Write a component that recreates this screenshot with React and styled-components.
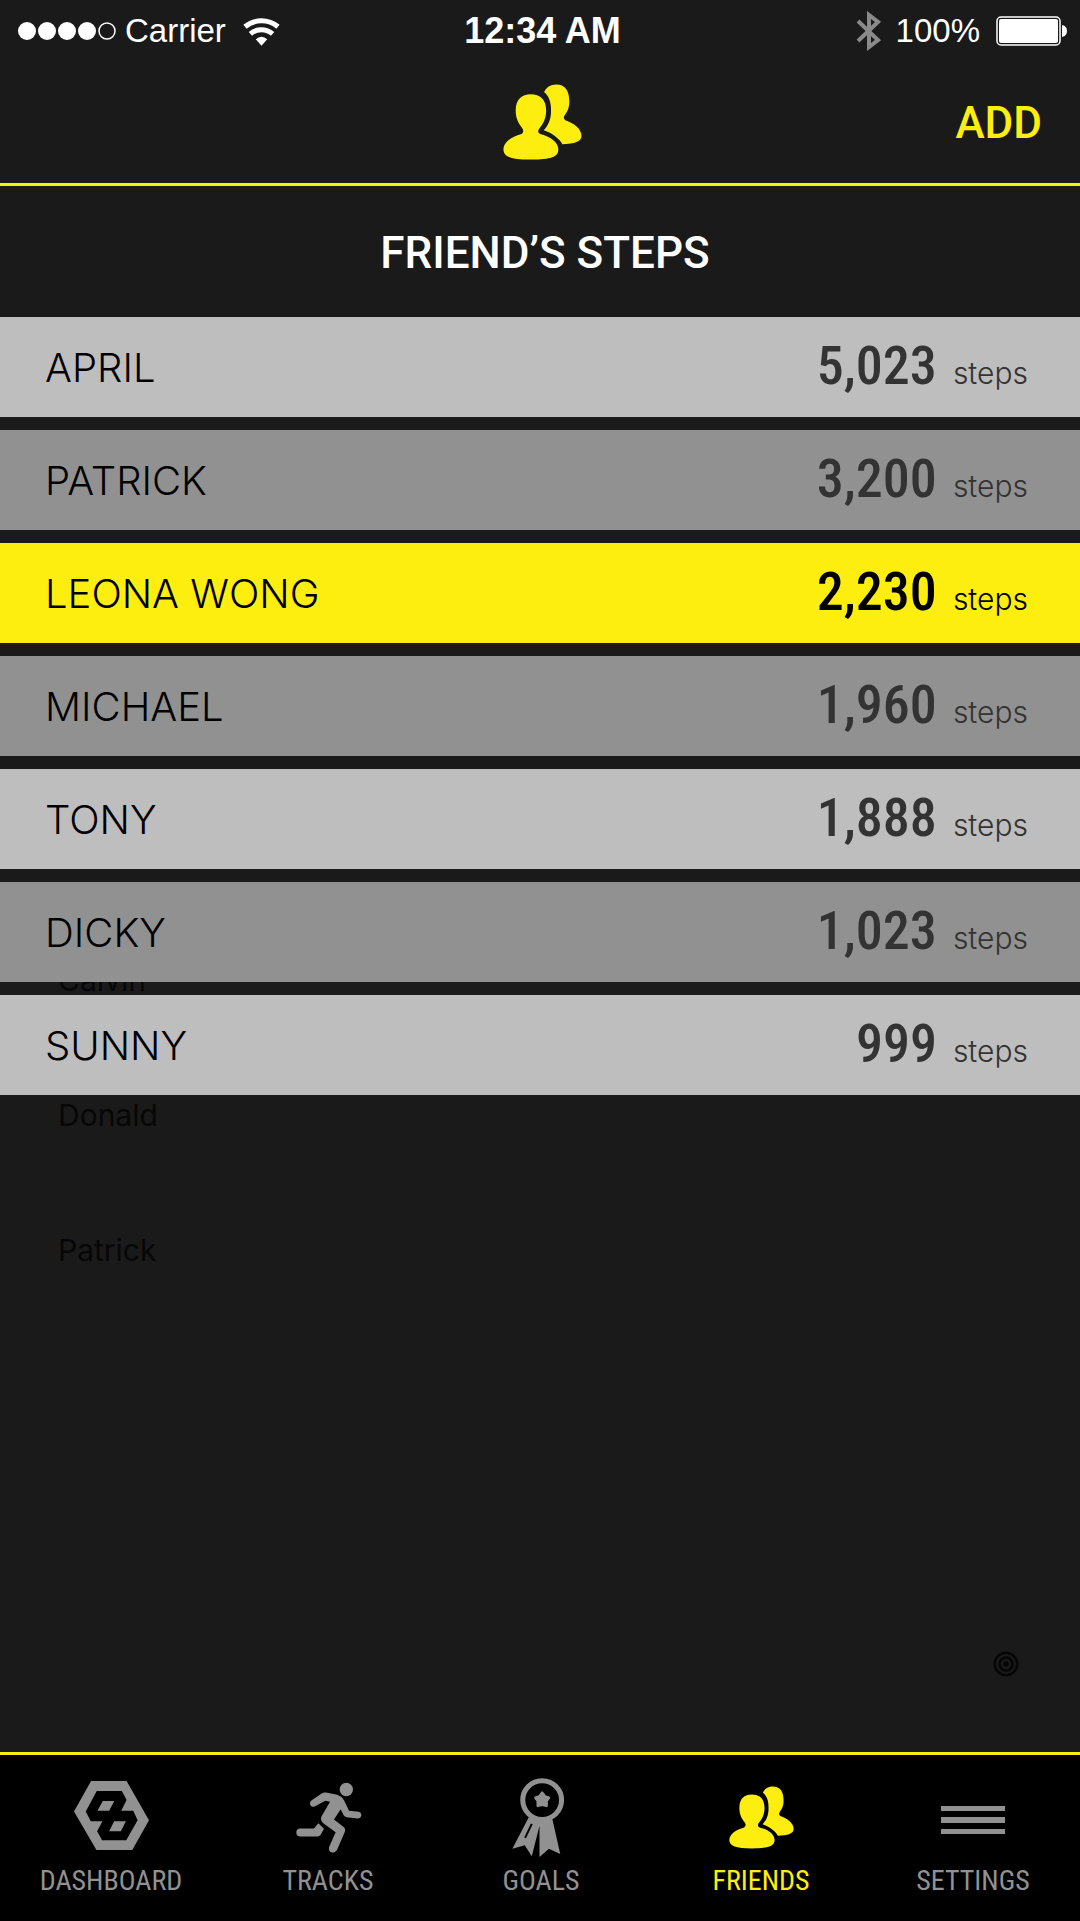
import React, { useState } from 'react';
import styled, { createGlobalStyle } from 'styled-components';

const YELLOW = '#FDEE10';
const GREY = '#919191';

const friends = [
    { name: 'APRIL', steps: '5,023' },
    { name: 'PATRICK', steps: '3,200' },
    { name: 'LEONA WONG', steps: '2,230', me: true },
    { name: 'MICHAEL', steps: '1,960' },
    { name: 'TONY', steps: '1,888' },
    { name: 'DICKY', steps: '1,023' },
    { name: 'SUNNY', steps: '999' },
];

const contacts = ['Calvin', 'Donald', 'Patrick'];

const FriendsIcon = ({ width, height }) => (
    <svg width={width} height={height} viewBox='866 137 194 187' fill='currentColor' aria-hidden='true'>
        <path d='M934 162C912 162 897 174 897 203C897 222 905 236 912 244C917 250 917 256 911 260C888 266 867 280 867 298C867 316 886 323 935 323C984 323 1002 316 1002 298C1002 280 982 266 957 260C950 256 952 250 957 244C964 236 972 222 972 203C972 174 957 162 934 162Z' />
        <path d='M967 157C972 145 982 138 997 138C1018 138 1029 152 1029 180C1029 198 1022 208 1018 213C1014 218 1015 222 1019 226C1040 233 1059 247 1059 265C1059 278 1042 285 1012 285C1004 272 988 258 966 251C975 242 985 226 984 200C984 180 978 165 967 157Z' />
    </svg>
);

const DashboardIcon = () => (
    <svg width='75' height='73' viewBox='219 120 224 218' fill='currentColor' aria-hidden='true'>
        <path
            fillRule='evenodd'
            d='M270 120H376L443 237L393 326H286L219 211ZM287 150L254 211L269 240H304L288 270L303 297H375L409 237L396 209H360L376 177L362 150ZM305 180H339L324 209H289ZM339 240H374L359 270H324Z'
        />
    </svg>
);

const TracksIcon = () => (
    <svg width='68' height='71' viewBox='882 122 204 212' fill='currentColor' aria-hidden='true'>
        <circle cx='1039' cy='144' r='20' />
        <path d='M933 178L966 155Q971 152 978 153L1012 160Q1026 165 1032 176L1047 208L1076 211Q1085 214 1084 222Q1082 231 1073 231L1040 227Q1034 226 1031 221L1022 203L1002 234L1030 256Q1038 262 1034 272L1012 323Q1006 334 996 333Q985 330 987 317L1007 272L972 247Q960 238 964 226L990 181L976 178L944 195Q936 197 931 191Q928 184 933 178Z' />
        <path d='M901 261H942L955 245L972 262L962 280Q958 285 952 285H901A12 12 0 0 1 901 261Z' />
    </svg>
);

const GoalsIcon = () => (
    <svg width='59' height='79' viewBox='216 113 176 236' fill='currentColor' aria-hidden='true'>
        <circle cx='306' cy='179' r='58' fill='none' stroke='currentColor' strokeWidth='15' />
        <path
            d='M306 157L314 168L326 172L319 182L319 196L306 193L293 196L293 182L286 172L298 168Z'
            stroke='currentColor'
            strokeWidth='8'
            strokeLinejoin='round'
        />
        <path d='M266 230L217 324L254 314L275 347L298 256L298 349L326 324L360 340L336 234Q306 246 266 230Z' />
        <path d='M275 250L255 292' stroke='#000' strokeWidth='6' />
    </svg>
);

const SettingsIcon = () => (
    <svg width='64' height='35' viewBox='0 0 64 35' fill='currentColor' aria-hidden='true'>
        <rect y='6' width='64' height='5' />
        <rect y='17' width='64' height='6' />
        <rect y='29' width='64' height='5' />
    </svg>
);

const SignalIcon = () => (
    <svg width='100' height='20' viewBox='0 0 100 20' fill='#FFF' aria-hidden='true'>
        <circle cx='10' cy='10' r='9' />
        <circle cx='30' cy='10' r='9' />
        <circle cx='50' cy='10' r='9' />
        <circle cx='70' cy='10' r='9' />
        <circle cx='90' cy='10' r='8' fill='none' stroke='#FFF' strokeWidth='1.5' />
    </svg>
);

const WifiIcon = () => (
    <svg width='37' height='29' viewBox='728 44 110 86' fill='none' stroke='#FFF' strokeWidth='15' aria-hidden='true'>
        <path d='M734 73A76 76 0 0 1 832 73' />
        <path d='M750 94A50 50 0 0 1 816 94' />
        <path d='M783 129L766 110Q783 95 800 110Z' fill='#FFF' stroke='none' />
    </svg>
);

const BluetoothIcon = () => (
    <svg width='26' height='40' viewBox='0 0 26 40' fill='none' stroke='#8A8A8A' strokeWidth='4' aria-hidden='true'>
        <path d='M2 10L22 29L13 36V4L22 11L2 30' />
    </svg>
);

const BatteryIcon = () => (
    <svg width='72' height='30' viewBox='0 0 72 30' aria-hidden='true'>
        <rect x='1' y='1' width='63' height='28' rx='4' fill='none' stroke='#FFF' strokeWidth='1.5' />
        <rect x='3' y='3' width='59' height='24' rx='2' fill='#FFF' />
        <path d='M66 9Q71 10 71 15Q71 20 66 21Z' fill='#FFF' />
    </svg>
);

const TargetIcon = () => (
    <svg width='26' height='26' viewBox='0 0 26 26' fill='none' stroke='#060606' strokeWidth='2.5' aria-hidden='true'>
        <circle cx='13' cy='13' r='11.3' />
        <circle cx='13' cy='13' r='6.5' />
        <circle cx='13' cy='13' r='1.5' fill='#060606' />
    </svg>
);

const tabs = [
    { label: 'DASHBOARD', icon: <DashboardIcon /> },
    { label: 'TRACKS', icon: <TracksIcon /> },
    { label: 'GOALS', icon: <GoalsIcon /> },
    { label: 'FRIENDS', icon: <FriendsIcon width='65' height='63' /> },
    { label: 'SETTINGS', icon: <SettingsIcon /> },
];

const App = () => {
    const [active, setActive] = useState('FRIENDS');

    return (
        <>
            <GlobalStyle />
            <Screen>
                <StatusBar>
                    <StatusGroup>
                        <SignalIcon />
                        <span>Carrier</span>
                        <Wifi><WifiIcon /></Wifi>
                    </StatusGroup>
                    <Clock>12:34 AM</Clock>
                    <StatusGroup $end>
                        <BluetoothIcon />
                        <Percent>100%</Percent>
                        <BatteryIcon />
                    </StatusGroup>
                </StatusBar>
                <Header>
                    <HeaderIcon><FriendsIcon width='79' height='76' /></HeaderIcon>
                    <AddButton type='button'>ADD</AddButton>
                </Header>
                <Title>FRIEND’S STEPS</Title>
                <Content>
                    <Contacts>
                        {contacts.map((name) => <li key={name}>{name}</li>)}
                    </Contacts>
                    <List>
                        {friends.map(({ name, steps, me }) => (
                            <Row key={name} $me={me}>
                                <Name>{name}</Name>
                                <Score>
                                    <Count>{steps}</Count>
                                    <Unit>steps</Unit>
                                </Score>
                            </Row>
                        ))}
                    </List>
                    <Target><TargetIcon /></Target>
                </Content>
                <TabBar>
                    {tabs.map(({ label, icon }) => (
                        <Tab
                            key={label}
                            href={`#${label.toLowerCase()}`}
                            $active={active === label}
                            onClick={() => setActive(label)}
                        >
                            <TabIcon>{icon}</TabIcon>
                            {label}
                        </Tab>
                    ))}
                </TabBar>
            </Screen>
        </>
    );
};
export default App;

const GlobalStyle = createGlobalStyle`
    * {
        box-sizing: border-box;
        margin: 0;
        padding: 0;
    }
    body {
        background-color: #1A1A1A;
    }
    svg {
        display: block;
        flex-shrink: 0;
    }
    ul {
        list-style: none;
    }
`;

const Screen = styled.div`
    display: flex;
    flex-direction: column;
    min-height: 100vh;
    background-color: #1A1A1A;
    font-family: Roboto, sans-serif;
`;

const StatusBar = styled.div`
    display: grid;
    grid-template-columns: 1fr auto 1fr;
    align-items: center;
    height: 62px;
    padding: 0 12px 0 17px;
    color: #FFF;
    font-family: 'Liberation Sans', Arial, sans-serif;
    font-size: 33px;
`;

const StatusGroup = styled.div`
    display: flex;
    align-items: center;
    justify-content: ${({ $end }) => $end ? 'flex-end' : 'flex-start'};
    gap: 8px;
`;

const Wifi = styled.span`
    padding-left: 9px;
`;

const Clock = styled.span`
    font-size: 36px;
    font-weight: 700;
`;

const Percent = styled.span`
    padding: 0 8px 0 6px;
`;

const Header = styled.header`
    display: grid;
    grid-template-columns: 1fr auto 1fr;
    align-items: center;
    height: 124px;
    padding: 0 38px 0 43px;
    border-bottom: 3px solid ${YELLOW};
    color: ${YELLOW};
`;

const HeaderIcon = styled.div`
    grid-column: 2;
    padding-bottom: 2px;
`;

const AddButton = styled.button`
    justify-self: end;
    border: none;
    background: none;
    color: inherit;
    font-family: inherit;
    font-size: 44px;
    font-weight: 500;
    line-height: 54px;
    cursor: pointer;
`;

const Title = styled.h1`
    padding: 40px 0 37px 10px;
    color: #FFF;
    font-size: 44px;
    font-weight: 500;
    line-height: 54px;
    text-align: center;
`;

const Content = styled.main`
    display: grid;
    flex: 1;
    grid-template-rows: auto 1fr;
`;

const List = styled.ul`
    display: flex;
    flex-direction: column;
    grid-area: 1 / 1;
    align-self: start;
    gap: 13px;
    z-index: 1;
`;

const Row = styled.li`
    display: flex;
    align-items: center;
    justify-content: space-between;
    height: 100px;
    padding: 0 52px 0 45px;
    background-color: ${({ $me }) => $me ? YELLOW : '#BEBEBE'};
    color: ${({ $me }) => $me ? '#000' : '#333'};

    &:nth-child(even) {
        background-color: ${GREY};
    }
`;

const Name = styled.span`
    color: #000;
    font-family: Inter, sans-serif;
    font-size: 40px;
    font-weight: 300;
`;

const Score = styled.span`
    display: flex;
    align-items: baseline;
    gap: 16px;
    padding-bottom: 2px;
`;

const Count = styled.strong`
    font-family: 'Roboto Condensed', Roboto, sans-serif;
    font-size: 54px;
    font-weight: 500;
    line-height: 64px;
`;

const Unit = styled.span`
    font-family: Inter, sans-serif;
    font-size: 30px;
    font-weight: 300;
`;

/* unselected contacts, hidden behind the ranking */
const Contacts = styled.ul`
    grid-area: 1 / 1 / 3 / 2;
    padding: 645px 0 0 58px;
    color: #070707;
    font-family: Inter, sans-serif;
    font-size: 30px;

    li {
        line-height: 36px;
        padding-bottom: 99px;
    }
`;

const Target = styled.div`
    grid-area: 2 / 1;
    align-self: end;
    justify-self: end;
    padding: 0 61px 75px 0;
`;

const TabBar = styled.nav`
    display: grid;
    grid-template-columns: 111fr 106fr 107fr 113fr 99fr;
    padding: 22px 8px 24px 0;
    border-top: 3px solid ${YELLOW};
    background-color: #000;
`;

const Tab = styled.a`
    display: flex;
    flex-direction: column;
    align-items: center;
    gap: 8px;
    color: ${({ $active }) => $active ? YELLOW : GREY};
    font-family: 'Roboto Condensed', Roboto, sans-serif;
    font-size: 28px;
    line-height: 32px;
    text-decoration: none;
`;

const TabIcon = styled.span`
    display: flex;
    align-items: center;
    height: 80px;
`;
